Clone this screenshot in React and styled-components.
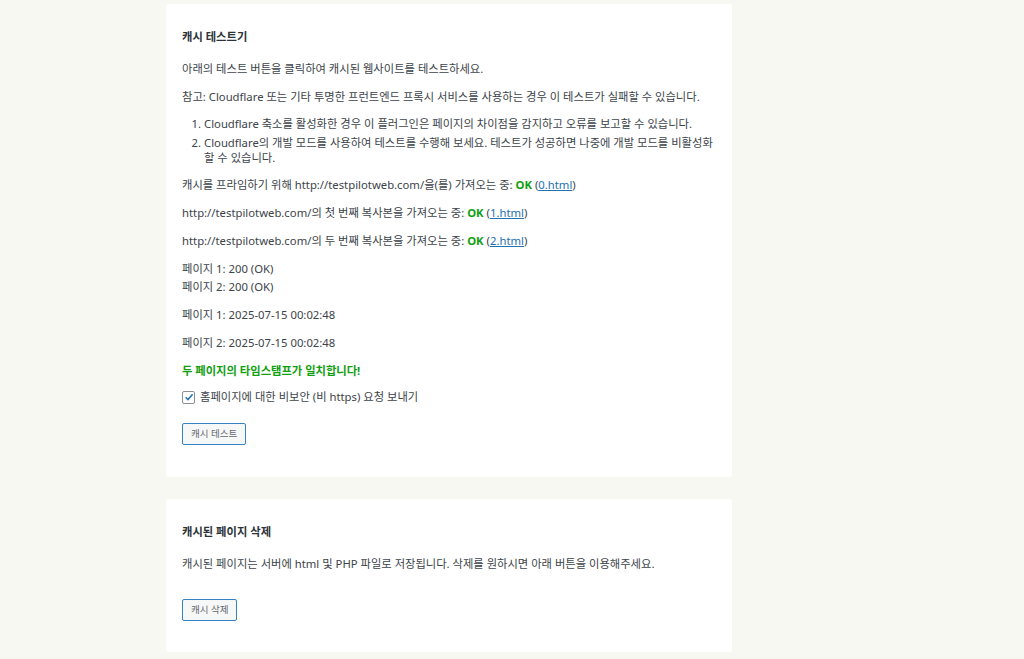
import styled, { createGlobalStyle } from "styled-components";

const GlobalStyle = createGlobalStyle`
  html, body {
    margin: 0;
    padding: 0;
    background: #f8f8f3;
  }
  body {
    font-family: "Noto Sans", "Noto Sans CJK KR", sans-serif;
    font-size: 11.3px;
    color: #3c434a;
  }
`;

const Page = styled.div`
  padding: 4px 0 6px 166px;
`;

const Card = styled.section`
  width: 566px;
  box-sizing: border-box;
  background: #ffffff;
  border-radius: 3px;
  padding: 24px 16px ${(p) => p.$bottom}px;
  margin-bottom: 22px;
`;

const Title = styled.h3`
  margin: 0 0 14px;
  font-size: 11.3px;
  line-height: 18px;
  font-weight: 700;
  color: #2c3338;
`;

const Text = styled.p`
  margin: 0 0 10px;
  line-height: 18px;
`;

const Success = styled(Text)`
  color: #10a010;
  font-weight: 700;
  margin-bottom: 8px;
`;

const Ok = styled.strong`
  color: #10a010;
`;

const FileLink = styled.a`
  color: #2271b1;
  text-decoration: underline;
`;

const Steps = styled.ol`
  margin: 8px 0 11px;
  padding-left: 22px;

  li {
    line-height: 15px;
    margin-bottom: 4px;
  }
`;

const CheckRow = styled.label`
  display: flex;
  align-items: center;
  gap: 5px;
  line-height: 18px;
`;

const Box = styled.span`
  width: 11px;
  height: 11px;
  border: 1px solid #8c8f94;
  border-radius: 2px;
  display: inline-flex;
  align-items: center;
  justify-content: center;
  background: #fff;
`;

const Actions = styled.div`
  margin-top: ${(p) => p.$top}px;
  line-height: 0;
`;

const Button = styled.button`
  height: 22px;
  padding: 0 8px;
  border: 1px solid #3582c4;
  border-radius: 2px;
  background: #f6f7f7;
  color: #646970;
  font-family: "Noto Sans", "Noto Sans CJK KR", sans-serif;
  font-size: 9.5px;
  line-height: 20px;
  cursor: pointer;
`;

export default function App() {
  return (
    <>
      <GlobalStyle />
      <Page>
        <Card $bottom={32}>
          <Title>캐시 테스트기</Title>
          <Text>아래의 테스트 버튼을 클릭하여 캐시된 웹사이트를 테스트하세요.</Text>
          <Text>
            참고: Cloudflare 또는 기타 투명한 프런트엔드 프록시 서비스를 사용하는 경우 이 테스트가 실패할 수 있습니다.
          </Text>
          <Steps>
            <li>Cloudflare 축소를 활성화한 경우 이 플러그인은 페이지의 차이점을 감지하고 오류를 보고할 수 있습니다.</li>
            <li>
              Cloudflare의 개발 모드를 사용하여 테스트를 수행해 보세요. 테스트가 성공하면 나중에 개발 모드를 비활성화할 수 있습니다.
            </li>
          </Steps>
          <Text>
            캐시를 프라임하기 위해 http://testpilotweb.com/을(를) 가져오는 중: <Ok>OK</Ok> (
            <FileLink href="#">0.html</FileLink>)
          </Text>
          <Text>
            http://testpilotweb.com/의 첫 번째 복사본을 가져오는 중: <Ok>OK</Ok> (
            <FileLink href="#">1.html</FileLink>)
          </Text>
          <Text>
            http://testpilotweb.com/의 두 번째 복사본을 가져오는 중: <Ok>OK</Ok> (
            <FileLink href="#">2.html</FileLink>)
          </Text>
          <Text>
            페이지 1: 200 (OK)
            <br />
            페이지 2: 200 (OK)
          </Text>
          <Text>페이지 1: 2025-07-15 00:02:48</Text>
          <Text>페이지 2: 2025-07-15 00:02:48</Text>
          <Success>두 페이지의 타임스탬프가 일치합니다!</Success>
          <CheckRow>
            <Box>
              <svg width="10" height="10" viewBox="0 0 10 10">
                <path d="M1.6 5.2 L4 7.6 L8.6 2.2" fill="none" stroke="#2271b1" strokeWidth="1.5" />
              </svg>
            </Box>
            홈페이지에 대한 비보안 (비 https) 요청 보내기
          </CheckRow>
          <Actions $top={17}>
            <Button>캐시 테스트</Button>
          </Actions>
        </Card>
        <Card $bottom={31}>
          <Title>캐시된 페이지 삭제</Title>
          <Text>캐시된 페이지는 서버에 html 및 PHP 파일로 저장됩니다. 삭제를 원하시면 아래 버튼을 이용해주세요.</Text>
          <Actions $top={26}>
            <Button>캐시 삭제</Button>
          </Actions>
        </Card>
      </Page>
    </>
  );
}
